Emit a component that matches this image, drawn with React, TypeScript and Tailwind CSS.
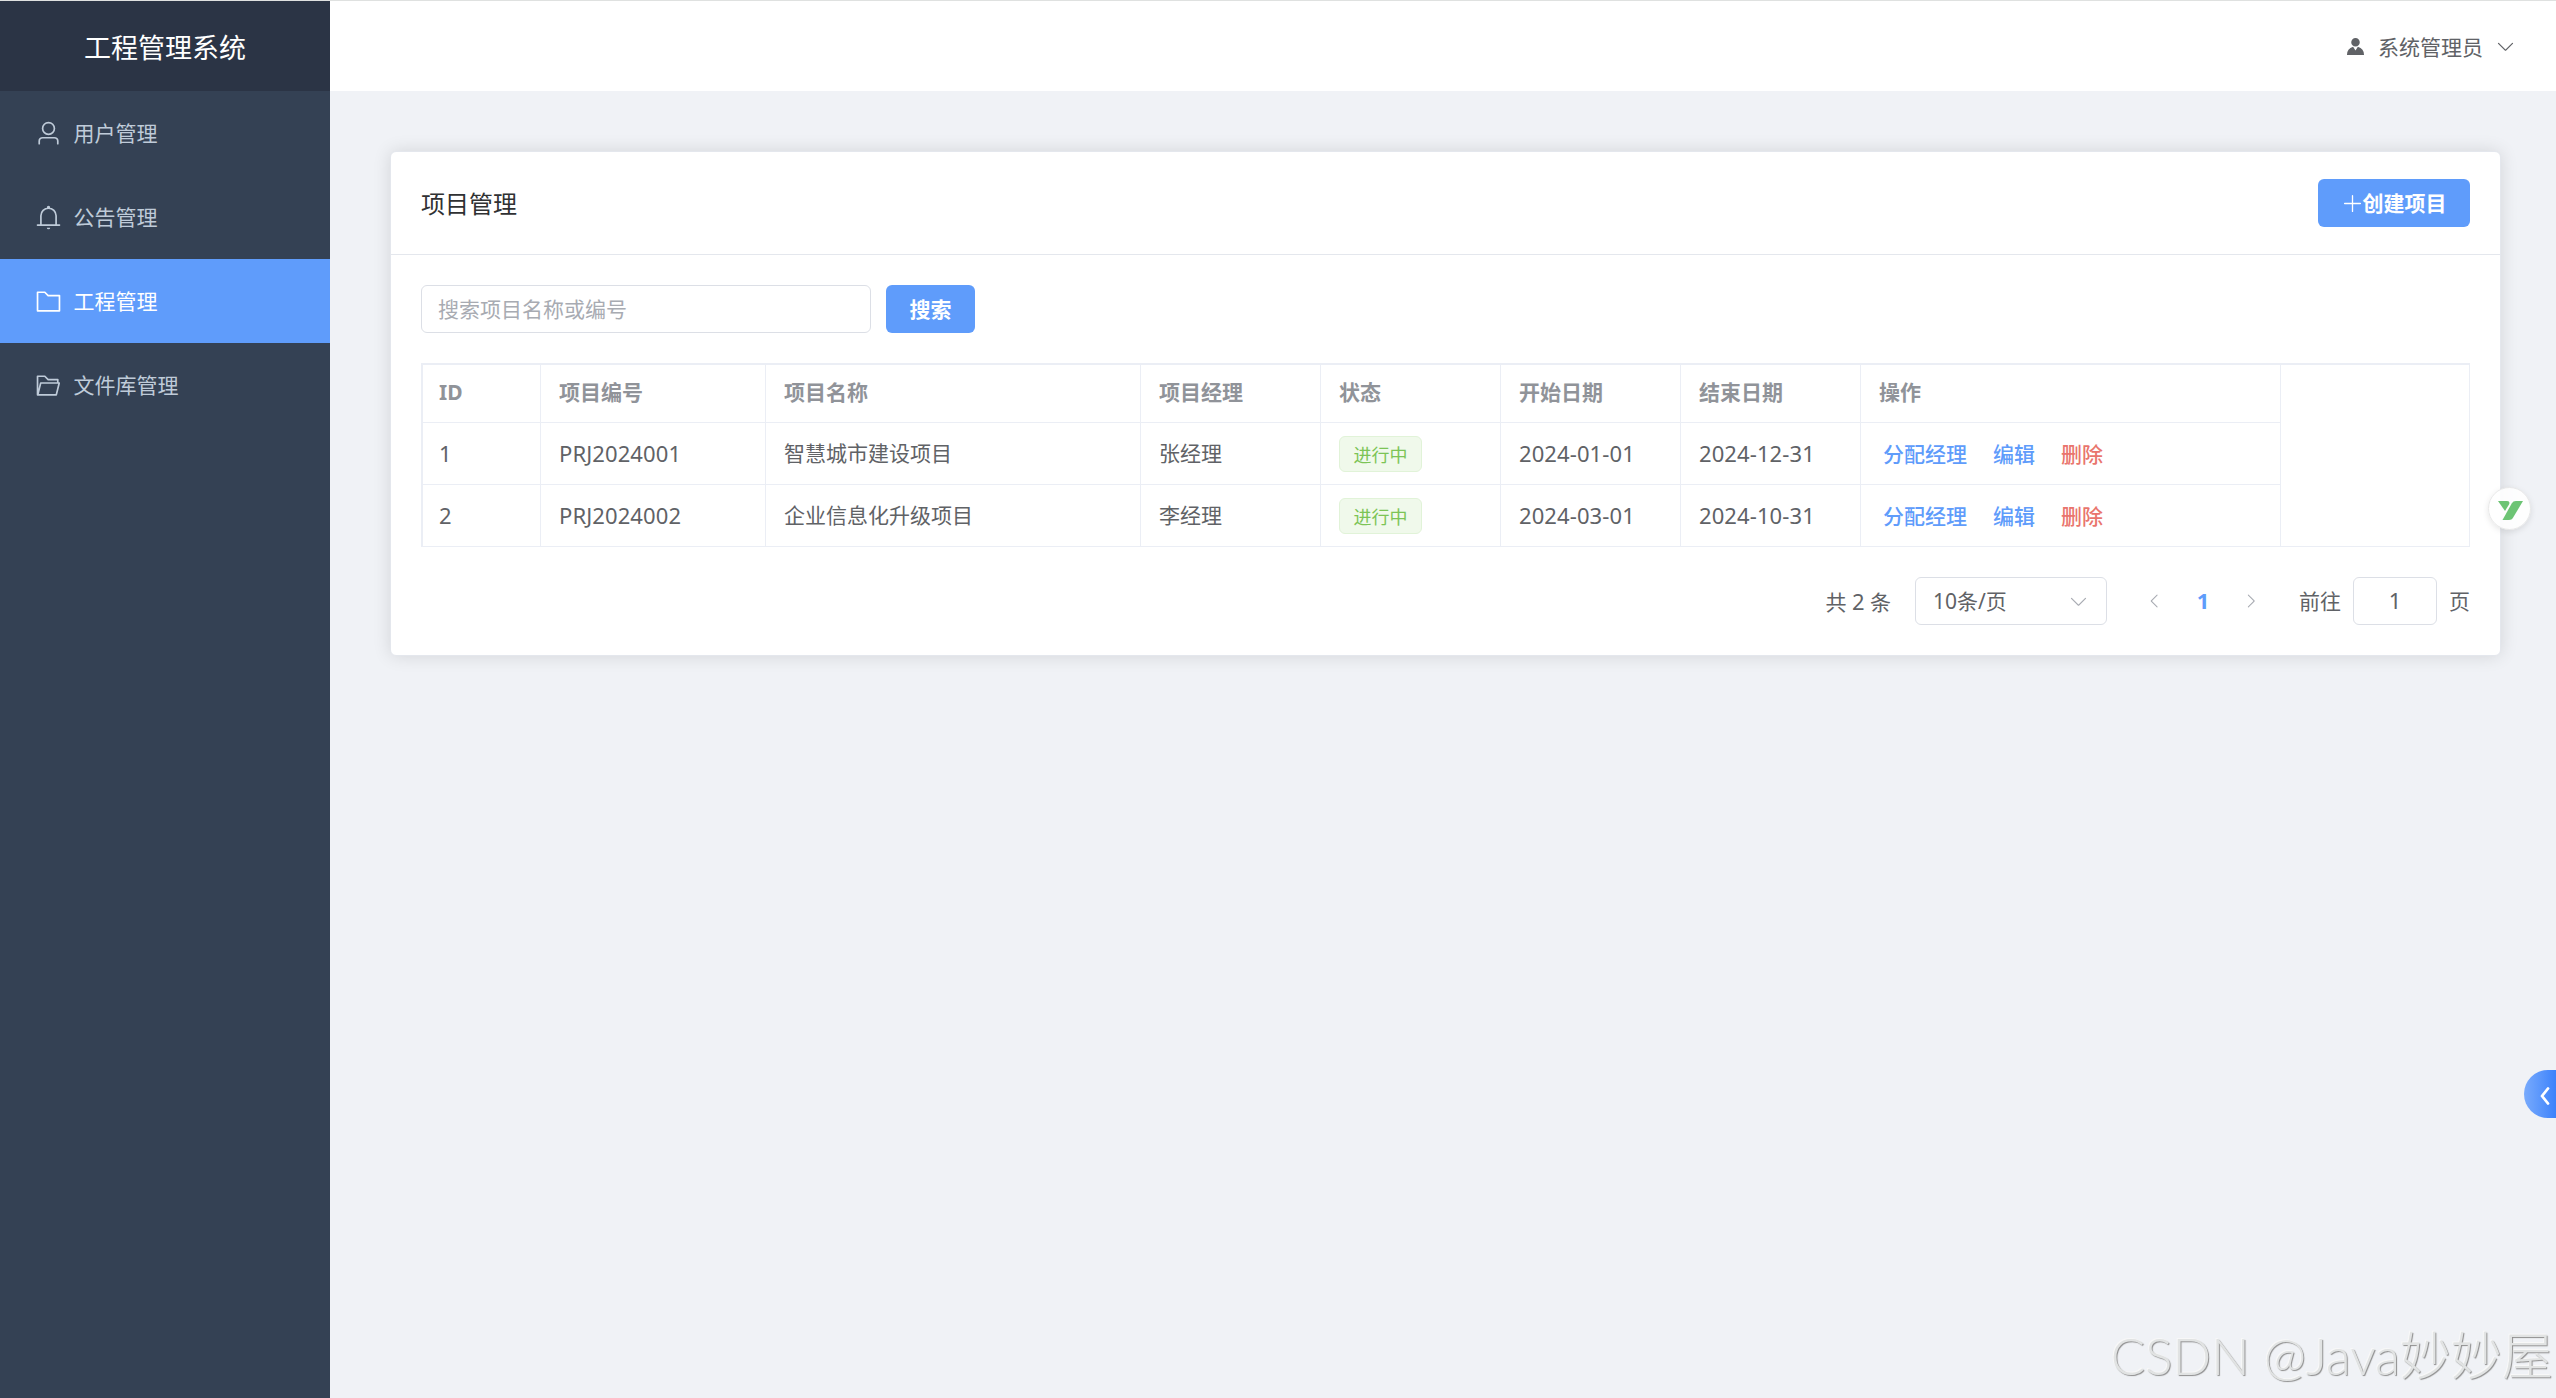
import type { ReactNode } from "react";

type Project = {
  id: number;
  code: string;
  name: string;
  manager: string;
  status: string;
  start: string;
  end: string;
};

const projects: Project[] = [
  {
    id: 1,
    code: "PRJ2024001",
    name: "智慧城市建设项目",
    manager: "张经理",
    status: "进行中",
    start: "2024-01-01",
    end: "2024-12-31",
  },
  {
    id: 2,
    code: "PRJ2024002",
    name: "企业信息化升级项目",
    manager: "李经理",
    status: "进行中",
    start: "2024-03-01",
    end: "2024-10-31",
  },
];

const ICONS = {
  user: "M512 512a192 192 0 1 0 0-384 192 192 0 0 0 0 384m0 64a256 256 0 1 1 0-512 256 256 0 0 1 0 512m320 320v-96a96 96 0 0 0-96-96H288a96 96 0 0 0-96 96v96a32 32 0 1 1-64 0v-96a160 160 0 0 1 160-160h448a160 160 0 0 1 160 160v96a32 32 0 1 1-64 0",
  bell: "M512 64a64 64 0 0 1 64 64v64H448v-64a64 64 0 0 1 64-64M256 768h512V448a256 256 0 1 0-512 0zm256-640a320 320 0 0 1 320 320v384H192V448a320 320 0 0 1 320-320M96 768h832q32 0 32 32t-32 32H96q-32 0-32-32t32-32m352 128h128a64 64 0 0 1-128 0",
  folder:
    "M128 192v640h768V320H485.76L357.504 192zm-32-64h287.872l128.384 128H928a32 32 0 0 1 32 32v576a32 32 0 0 1-32 32H96a32 32 0 0 1-32-32V160a32 32 0 0 1 32-32",
  folderOpened:
    "M878.08 448H241.92l-96 384h636.16l96-384zM832 384v-64H485.76L357.504 192H128v448l57.92-231.744A32 32 0 0 1 216.96 384zm-24.96 512H96a32 32 0 0 1-32-32V160a32 32 0 0 1 32-32h287.872l128.384 128H864a32 32 0 0 1 32 32v96h23.04a32 32 0 0 1 31.04 39.744l-112 448A32 32 0 0 1 807.04 896",
  avatar:
    "M628.736 528.896A416 416 0 0 1 928 928H96a415.872 415.872 0 0 1 299.264-399.104L512 704zM720 304a208 208 0 1 1-416 0 208 208 0 0 1 416 0",
  plus: "M480 480V128a32 32 0 0 1 64 0v352h352a32 32 0 1 1 0 64H544v352a32 32 0 1 1-64 0V544H128a32 32 0 0 1 0-64z",
  down: "M831.872 340.864 512 652.672 192.128 340.864a30.592 30.592 0 0 0-42.752 0 29.12 29.12 0 0 0 0 41.6L489.664 714.24a32 32 0 0 0 44.672 0l340.288-331.712a29.12 29.12 0 0 0 0-41.728 30.592 30.592 0 0 0-42.752 0z",
  left: "M609.408 149.376 277.76 489.6a32 32 0 0 0 0 44.672l331.648 340.352a29.12 29.12 0 0 0 41.728 0 30.592 30.592 0 0 0 0-42.752L339.264 511.936l311.872-319.872a30.592 30.592 0 0 0 0-42.688 29.12 29.12 0 0 0-41.728 0",
  right:
    "M340.864 149.312a30.592 30.592 0 0 0 0 42.752L652.736 512 340.864 831.872a30.592 30.592 0 0 0 0 42.752 29.12 29.12 0 0 0 41.728 0L714.24 534.336a32 32 0 0 0 0-44.672L382.592 149.376a29.12 29.12 0 0 0-41.728 0z",
};

type IconName = keyof typeof ICONS;

function Icon({ name, className = "" }: { name: IconName; className?: string }) {
  return (
    <svg
      viewBox="0 0 1024 1024"
      fill="currentColor"
      className={`shrink-0 ${className}`}
      aria-hidden="true"
    >
      <path d={ICONS[name]} />
    </svg>
  );
}

const menus: { label: string; icon: IconName; active?: boolean }[] = [
  { label: "用户管理", icon: "user" },
  { label: "公告管理", icon: "bell" },
  { label: "工程管理", icon: "folder", active: true },
  { label: "文件库管理", icon: "folderOpened" },
];

function Sidebar() {
  return (
    <aside className="w-[330px] shrink-0 bg-[#344154]">
      <h1 className="flex h-[90px] items-center justify-center bg-[#2b3445] pt-[3px] text-[27px] text-white">
        工程管理系统
      </h1>
      <nav>
        {menus.map((m) => (
          <a
            key={m.label}
            className={`flex h-[84px] items-center pl-[30px] ${
              m.active ? "bg-[#5f9cfb] text-white" : "text-[#bfcbd9]"
            }`}
          >
            <span className="mr-[7.5px] flex w-9 justify-center">
              <Icon name={m.icon} className="size-[27px]" />
            </span>
            <span>{m.label}</span>
          </a>
        ))}
      </nav>
    </aside>
  );
}

function Th({ children }: { children?: ReactNode }) {
  return (
    <th className="h-[58px] border-r border-b border-[#ebeef5] px-[18px] pb-0.5 text-left font-bold first:pl-4">
      {children}
    </th>
  );
}

function Td({ children }: { children?: ReactNode }) {
  return (
    <td className="h-[62px] border-r border-b border-[#ebeef5] px-[18px] first:pl-4">
      {children}
    </td>
  );
}

// 西文与数字略大于中文
function Num({ children }: { children?: ReactNode }) {
  return <div className="pb-0.5 text-[22px] tracking-[0.1px]">{children}</div>;
}

function ProjectTable() {
  return (
    <div className="mt-[30px] flex border-t-2 border-l-2 border-[#ebeef5]">
      <table className="w-[1858px] table-fixed border-separate border-spacing-0">
        <colgroup>
          <col className="w-[118px]" />
          <col className="w-[225px]" />
          <col className="w-[375px]" />
          <col className="w-[180px]" />
          <col className="w-[180px]" />
          <col className="w-[180px]" />
          <col className="w-[180px]" />
          <col className="w-[420px]" />
        </colgroup>
        <thead className="text-[#909399]">
          <tr>
            <Th>ID</Th>
            <Th>项目编号</Th>
            <Th>项目名称</Th>
            <Th>项目经理</Th>
            <Th>状态</Th>
            <Th>开始日期</Th>
            <Th>结束日期</Th>
            <Th>操作</Th>
          </tr>
        </thead>
        <tbody>
          {projects.map((p) => (
            <tr key={p.id}>
              <Td>
                <Num>{p.id}</Num>
              </Td>
              <Td>
                <Num>{p.code}</Num>
              </Td>
              <Td>{p.name}</Td>
              <Td>{p.manager}</Td>
              <Td>
                <span className="flex h-9 w-[83px] items-center justify-center rounded-md border border-[#e1f3d8] bg-[#f0f9eb] pt-0.5 text-lg text-[#7cc456]">
                  {p.status}
                </span>
              </Td>
              <Td>
                <Num>{p.start}</Num>
              </Td>
              <Td>
                <Num>{p.end}</Num>
              </Td>
              <Td>
                <div className="flex gap-[26px] pt-0.5 pl-1 font-medium text-[#5f9cfb]">
                  <a>分配经理</a>
                  <a>编辑</a>
                  <a className="text-[#e9756d]">删除</a>
                </div>
              </Td>
            </tr>
          ))}
        </tbody>
      </table>
      <div className="flex-1 border-r border-b border-[#ebeef5]" />
    </div>
  );
}

function Pagination() {
  return (
    <div className="mt-[30px] flex h-12 items-center justify-end">
      <span className="pt-px">
        共 <span className="text-[22px]">2</span> 条
      </span>
      <div className="ml-6 flex h-12 w-[192px] items-center justify-between rounded-md border-[1.5px] border-[#dcdfe6] px-[17px]">
        <span>10条/页</span>
        <Icon name="down" className="size-[21px] text-[#a8abb2]" />
      </div>
      <button className="ml-6 flex w-12 justify-center text-[#a8abb2]">
        <Icon name="left" className="size-[18px]" />
      </button>
      <span className="w-12 pb-0.5 text-center text-[22px] font-bold text-[#5f9cfb]">1</span>
      <button className="flex w-12 justify-center text-[#a8abb2]">
        <Icon name="right" className="size-[18px]" />
      </button>
      <span className="ml-6 pt-px">前往</span>
      <div className="mx-3 flex h-12 w-[84px] items-center justify-center rounded-md border-[1.5px] border-[#dcdfe6] pb-0.5 text-[22px]">
        1
      </div>
      <span className="pt-px">页</span>
    </div>
  );
}

export default function App() {
  return (
    <div className="relative flex h-[1398px] w-[2556px] flex-col overflow-hidden border-t border-[#dfe1e0] bg-[#f0f2f6] font-['Noto_Sans','Noto_Sans_CJK_SC',sans-serif] text-[21px] leading-none text-[#606266]">
      <div className="flex flex-1">
        <Sidebar />
        <div className="flex flex-1 flex-col">
          <header className="flex h-[90px] items-center justify-end gap-3 bg-white pr-10">
            <Icon name="avatar" className="size-[21px]" />
            <span className="pt-0.5">系统管理员</span>
            <Icon name="down" className="size-[21px]" />
          </header>

          <main className="pt-[60px] pr-[55px] pl-[60px]">
            <section className="h-[505px] rounded-md border border-[#e4e7ed] bg-white shadow-[0_0_18px_rgba(0,0,0,0.12)]">
              <div className="flex h-[103px] items-center justify-between border-b border-[#e4e7ed] px-[30px]">
                <h2 className="pt-0.5 text-2xl text-[#303133]">项目管理</h2>
                <button className="flex h-12 w-[152px] items-center justify-center rounded-md bg-[#5f9cfb] font-bold text-white">
                  <Icon name="plus" className="size-[21px]" />
                  创建项目
                </button>
              </div>

              <div className="px-[30px] pt-[30px]">
                <div className="flex gap-[15px]">
                  <input
                    placeholder="搜索项目名称或编号"
                    className="h-12 w-[450px] rounded-md border-[1.5px] border-[#dcdfe6] px-4 placeholder:text-[#a8abb2]"
                  />
                  <button className="h-12 w-[89px] rounded-md bg-[#5f9cfb] font-bold text-white">
                    搜索
                  </button>
                </div>
                <ProjectTable />
                <Pagination />
              </div>
            </section>
          </main>
        </div>
      </div>

      {/* 悬浮按钮 */}
      <div className="absolute top-[486px] right-[25px] flex size-[43px] items-center justify-center rounded-full border border-[#e8e8e8] bg-white/90 shadow-[0_2px_6px_rgba(0,0,0,0.1)]">
        <svg viewBox="0 0 25 19" className="mt-1 ml-0.5 h-[19px] w-[25px]" fill="#6cc474">
          <path d="M0 0h9c2.500 0 2.900 1.800 2 3.400L7 10Z" />
          <path d="M25 0h-7c-2 0-3.200.8-4.300 2.500L4.500 19H11c2 0 3-.6 4-2.200Z" />
        </svg>
      </div>

      {/* 侧边抽屉把手 */}
      <div className="absolute top-[1069px] right-0 flex h-12 w-8 items-center justify-end rounded-l-full bg-linear-to-r from-[#78aafc] to-[#3c82fb] pr-1.5">
        <svg viewBox="0 0 10 18" className="mt-1 h-[18px] w-2.5" fill="none">
          <path d="M8 1.500 2 9l6 7.500" stroke="#fff" strokeWidth="2.800" strokeLinecap="round" strokeLinejoin="round" />
        </svg>
      </div>

      {/* 水印 */}
      <div className="absolute right-[3px] bottom-[17px] font-['Lato','Noto_Sans_CJK_SC',sans-serif] text-[51px] font-light whitespace-nowrap text-[#e1e3e3] [text-shadow:1px_1px_1px_#8e8e8e,-1px_-1px_0_#f8f8f8]">
        CSDN @Java妙妙屋
      </div>
    </div>
  );
}
